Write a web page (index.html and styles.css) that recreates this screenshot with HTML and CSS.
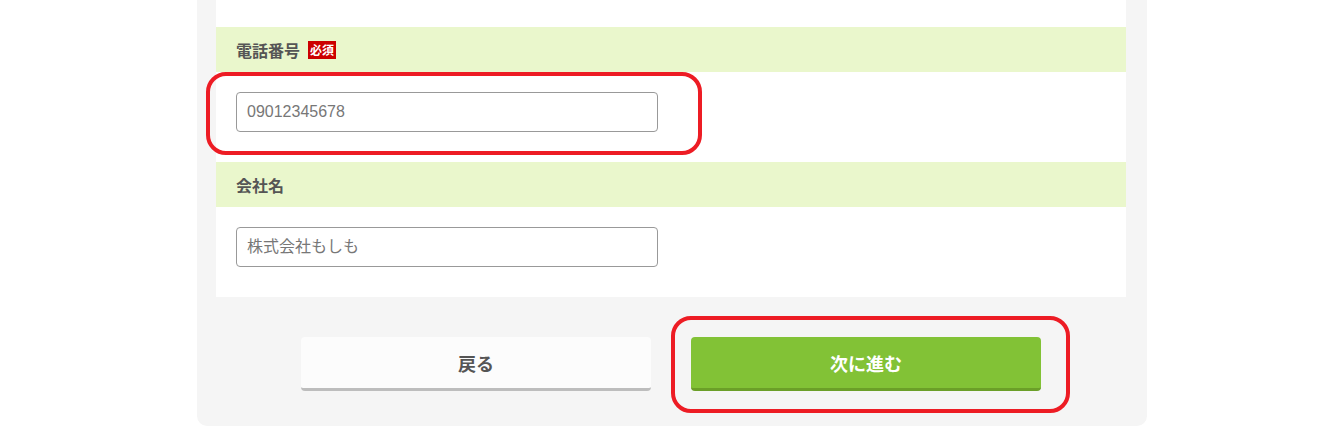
FILE: index.html
```html
<!DOCTYPE html>
<html lang="ja">
<head>
  <meta charset="UTF-8" />
  <meta name="viewport" content="width=device-width, initial-scale=1.0"/>
  <title>お問い合わせ</title>
  <link rel="stylesheet" href="styles.css">
</head>
<body>
  <div class="page">
    <div class="panel">
      <div class="form">
        <div class="field">
          <div class="field-label">電話番号 <span class="required">必須</span></div>
          <div class="field-body">
            <input type="tel" class="text-input" placeholder="09012345678" />
          </div>
        </div>
        <div class="field">
          <div class="field-label">会社名</div>
          <div class="field-body">
            <input type="text" class="text-input" placeholder="株式会社もしも" />
          </div>
        </div>
      </div>

      <div class="actions">
        <button class="btn btn-back">戻る</button>
        <button class="btn btn-next">次に進む</button>
      </div>

      <!-- red callouts -->
      <div class="callout callout-tel"></div>
      <div class="callout callout-next"></div>
    </div>
  </div>
</body>
</html>
```

FILE: styles.css
```css
:root {
  --panel: #f5f5f5;
  --label-bg: #eaf7cc;
  --text: #555;
  --green: #82c236;
  --green-dark: #6b9f28;
  --red: #ed1c24;
}

* { box-sizing: border-box; margin: 0; padding: 0; }

body {
  background: #fff;
  font-family: "Noto Sans CJK JP", sans-serif;
  color: var(--text);
}

.page {
  padding-left: 197px;
}

.panel {
  position: relative;
  width: 950px;
  padding: 0 21px 35px 19px;
  background: var(--panel);
  border-radius: 0 0 10px 10px;
}

.form {
  background: #fff;
  padding-top: 27px;
}

.field-label {
  display: flex;
  align-items: center;
  height: 45px;
  padding-left: 20px;
  background: var(--label-bg);
  font-size: 16px;
  font-weight: bold;
  color: var(--text);
}

.required {
  display: inline-block;
  margin-left: 8px;
  padding: 0 2px;
  height: 18px;
  line-height: 18px;
  background: #cc0000;
  color: #fff;
  font-size: 12px;
  font-weight: bold;
}

.field-body {
  padding: 20px 20px 30px;
}

.text-input {
  display: block;
  width: 422px;
  height: 40px;
  padding: 0 10px;
  border: 1px solid #999;
  border-radius: 4px;
  font-family: "Liberation Sans", "Noto Sans CJK JP", sans-serif;
  font-size: 16px;
  color: #333;
}
.text-input::placeholder { color: #777; }

.actions {
  display: flex;
  justify-content: center;
  gap: 40px;
  margin-top: 40px;
}

.btn {
  width: 350px;
  height: 54px;
  border: none;
  border-bottom: 3px solid;
  border-radius: 4px;
  font-family: "Noto Sans CJK JP", sans-serif;
  font-size: 18px;
  font-weight: bold;
  cursor: pointer;
}
.btn-back {
  background: #fcfcfc;
  color: var(--text);
  border-bottom-color: #bdbdbd;
}
.btn-next {
  background: var(--green);
  color: #fff;
  border-bottom-color: var(--green-dark);
}

.callout {
  position: absolute;
  border: 4px solid var(--red);
  border-radius: 20px;
  pointer-events: none;
}
.callout-tel  { left: 9px;   top: 72px;  width: 496px; height: 83px; }
.callout-next { left: 474px; top: 316px; width: 399px; height: 97px; }
```
